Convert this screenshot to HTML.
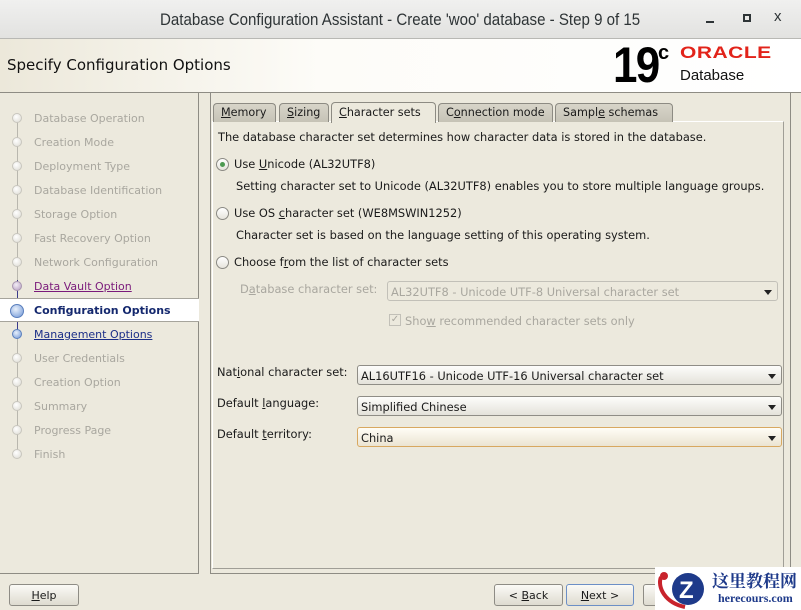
<!DOCTYPE html>
<html><head><meta charset="utf-8"><style>
*{margin:0;padding:0;box-sizing:border-box}
body{width:801px;height:610px;overflow:hidden;background:#ece9dd;font-family:"DejaVu Sans","Liberation Sans",sans-serif;font-size:11px;color:#1a1a1a;position:relative}
.a{position:absolute;white-space:nowrap}
.c{font-size:11.4px}
#title{left:0;top:0;width:801px;height:39px;background:linear-gradient(#f0f0ef,#e2e2e0);border-bottom:1px solid #b8b8b4}
#hdr{left:0;top:39px;width:801px;height:54px;background:linear-gradient(90deg,#ece8da,#fdfcf8 40%,#fff);border-bottom:1px solid #8e8c84}
.st{color:#a9a79f;font-size:11px}
.dot{position:absolute;left:12px;width:10px;height:10px;border-radius:50%;background:radial-gradient(circle at 40% 35%,#fff,#dcdad2);border:1px solid #c8c6be}
.tab{position:absolute;top:103px;height:19px;background:linear-gradient(#d8d5c9,#c6c3b6);border:1px solid #8d8b83;border-bottom:none;border-radius:4px 4px 0 0;padding:2px 0 0 7px;font-size:11.2px}
.sel{position:absolute;height:20px;border:1px solid #8f8d86;border-radius:3px;background:linear-gradient(#fdfdfb,#e4e2da);padding:3px 0 0 3px;font-size:11.4px}
.sel:after{content:"";position:absolute;right:5px;top:8px;border-left:4px solid transparent;border-right:4px solid transparent;border-top:5px solid #222}
.rad{position:absolute;width:13px;height:13px;border-radius:50%;border:1px solid #8b8a84;background:linear-gradient(#fff,#e6e4dc)}
.btn{position:absolute;top:584px;height:22px;border:1px solid #8e8c85;border-radius:3px;background:linear-gradient(#fbfaf6,#dedbd0);text-align:center;padding-top:4px}
</style></head><body>
<div class="a" id="title"></div>
<div class="a" style="left:160px;top:10px;font-family:'Liberation Sans',sans-serif;font-size:17px;color:#2e3436;transform:scaleX(0.887);transform-origin:0 0">Database Configuration Assistant - Create 'woo' database - Step 9 of 15</div>
<div class="a" style="left:706px;top:21px;width:8px;height:2px;background:#2e3436"></div>
<div class="a" style="left:743px;top:14px;width:8px;height:8px;border:2px solid #2e3436"></div>
<div class="a" style="left:774px;top:8px;font-family:'Liberation Sans',sans-serif;font-size:15px;color:#2e3436">x</div>
<div class="a" id="hdr"></div>
<div class="a" style="left:7px;top:56px;font-size:15px;color:#111;font-family:'DejaVu Sans',sans-serif">Specify Configuration Options</div>
<div class="a" style="left:613px;top:40px;font-family:'Liberation Sans',sans-serif;font-size:50px;font-weight:bold;color:#000;letter-spacing:-2px;line-height:50px;transform:scaleX(0.88);transform-origin:0 0">19</div>
<div class="a" style="left:658px;top:42px;font-family:'Liberation Sans',sans-serif;font-size:20px;font-weight:bold;color:#000">c</div>
<div class="a" style="left:680px;top:44px;font-family:'Liberation Sans',sans-serif;font-size:21px;font-weight:bold;color:#e2231a;letter-spacing:0.5px;transform:scaleY(0.78);transform-origin:0 0">ORACLE</div>
<div class="a" style="left:680px;top:67px;font-family:'Liberation Sans',sans-serif;font-size:15px;color:#111">Database</div>

<div class="a" style="left:198px;top:93px;width:1px;height:481px;background:#8e8c84"></div>
<div class="a" style="left:0;top:573px;width:199px;height:1px;background:#8e8c84"></div>
<div class="a" style="left:17px;top:120px;width:1px;height:336px;background:#b9b7ae"></div>
<div class="a" style="left:17px;top:280px;width:1px;height:56px;background:#3a3a8a"></div>
<div class="a" style="left:0;top:298px;width:199px;height:24px;background:#fff;border-top:1px solid #a6a49c;border-bottom:1px solid #a6a49c"></div>

<div class="dot" style="top:113px"></div><div class="a st" style="left:34px;top:112px">Database Operation</div>
<div class="dot" style="top:137px"></div><div class="a st" style="left:34px;top:136px">Creation Mode</div>
<div class="dot" style="top:161px"></div><div class="a st" style="left:34px;top:160px">Deployment Type</div>
<div class="dot" style="top:185px"></div><div class="a st" style="left:34px;top:184px">Database Identification</div>
<div class="dot" style="top:209px"></div><div class="a st" style="left:34px;top:208px">Storage Option</div>
<div class="dot" style="top:233px"></div><div class="a st" style="left:34px;top:232px">Fast Recovery Option</div>
<div class="dot" style="top:257px"></div><div class="a st" style="left:34px;top:256px">Network Configuration</div>
<div class="dot" style="top:281px;background:radial-gradient(circle at 40% 35%,#f3eef6,#b49cc0);border-color:#a896b0"></div><div class="a" style="left:34px;top:280px;color:#7a1a7a;text-decoration:underline">Data Vault Option</div>
<div class="dot" style="top:304px;left:10px;width:14px;height:14px;background:radial-gradient(circle at 40% 35%,#e8f0fb,#6f96d6);border-color:#5a7fbd"></div><div class="a" style="left:34px;top:304px;color:#14286e;font-weight:bold">Configuration Options</div>
<div class="dot" style="top:329px;background:radial-gradient(circle at 40% 35%,#e8f0fb,#6f96d6);border-color:#5a7fbd"></div><div class="a" style="left:34px;top:328px;color:#1c2f88;text-decoration:underline">Management Options</div>
<div class="dot" style="top:353px"></div><div class="a st" style="left:34px;top:352px">User Credentials</div>
<div class="dot" style="top:377px"></div><div class="a st" style="left:34px;top:376px">Creation Option</div>
<div class="dot" style="top:401px"></div><div class="a st" style="left:34px;top:400px">Summary</div>
<div class="dot" style="top:425px"></div><div class="a st" style="left:34px;top:424px">Progress Page</div>
<div class="dot" style="top:449px"></div><div class="a st" style="left:34px;top:448px">Finish</div>

<div class="a" style="left:210px;top:93px;width:1px;height:481px;background:#8e8c84"></div>
<div class="a" style="left:210px;top:573px;width:581px;height:1px;background:#8e8c84"></div>
<div class="a" style="left:790px;top:93px;width:1px;height:481px;background:#8e8c84"></div>
<div class="a" style="left:212px;top:121px;width:572px;height:448px;border:1px solid #a09e96;border-top-color:#fff;border-left-color:#fff"></div>

<div class="tab" style="left:213px;width:63px"><u>M</u>emory</div>
<div class="tab" style="left:279px;width:50px"><u>S</u>izing</div>
<div class="tab" style="left:331px;width:105px;top:102px;height:21px;background:#ece9dd;padding-top:3px"><u>C</u>haracter sets</div>
<div class="tab" style="left:438px;width:115px">C<u>o</u>nnection mode</div>
<div class="tab" style="left:555px;width:118px">Sampl<u>e</u> schemas</div>

<div class="a c" style="left:218px;top:130px">The database character set determines how character data is stored in the database.</div>
<div class="rad" style="left:216px;top:158px"><div style="position:absolute;left:3px;top:3px;width:5px;height:5px;border-radius:50%;background:#4d9a52"></div></div>
<div class="a c" style="left:234px;top:157px">Use <u>U</u>nicode (AL32UTF8)</div>
<div class="a c" style="left:236px;top:179px">Setting character set to Unicode (AL32UTF8) enables you to store multiple language groups.</div>
<div class="rad" style="left:216px;top:207px"></div>
<div class="a c" style="left:234px;top:206px">Use OS <u>c</u>haracter set (WE8MSWIN1252)</div>
<div class="a c" style="left:236px;top:228px">Character set is based on the language setting of this operating system.</div>
<div class="rad" style="left:216px;top:256px"></div>
<div class="a c" style="left:234px;top:255px">Choose f<u>r</u>om the list of character sets</div>
<div class="a c" style="left:240px;top:282px;color:#a9a79f">D<u>a</u>tabase character set:</div>
<div class="sel" style="left:387px;top:281px;width:391px;color:#a9a79f;background:#ece9dd;border-color:#c2c0b8">AL32UTF8 - Unicode UTF-8 Universal character set</div>
<div class="a" style="left:389px;top:314px;width:12px;height:12px;border:1px solid #c2c0b8;color:#a9a79f;font-size:10px;line-height:10px;text-align:center">✓</div>
<div class="a c" style="left:405px;top:314px;color:#a9a79f">Sho<u>w</u> recommended character sets only</div>

<div class="a c" style="left:217px;top:365px">Nat<u>i</u>onal character set:</div>
<div class="sel" style="left:357px;top:365px;width:425px">AL16UTF16 - Unicode UTF-16 Universal character set</div>
<div class="a c" style="left:217px;top:396px">Default <u>l</u>anguage:</div>
<div class="sel" style="left:357px;top:396px;width:425px">Simplified Chinese</div>
<div class="a c" style="left:217px;top:427px">Default <u>t</u>erritory:</div>
<div class="sel" style="left:357px;top:427px;width:425px;border-color:#d8a860;background:linear-gradient(#fffdf6,#ebe4d2)">China</div>

<div class="btn" style="left:9px;width:70px"><u>H</u>elp</div>
<div class="btn" style="left:494px;width:69px">&lt; <u>B</u>ack</div>
<div class="btn" style="left:566px;width:68px;border-color:#6c8fc6"><u>N</u>ext &gt;</div>
<div class="btn" style="left:643px;width:30px"></div>
<div class="a" style="left:655px;top:567px;width:146px;height:43px;background:#fff"></div>
<svg class="a" style="left:655px;top:567px" width="60" height="43"><path d="M6 10 C2 20 10 36 30 40" stroke="#c8232c" stroke-width="4" fill="none"/><circle cx="9" cy="9" r="4" fill="#c8232c"/><circle cx="33" cy="22" r="16" fill="#1e3a8a"/><text x="24" y="31" font-family="Liberation Sans" font-weight="bold" font-size="24" fill="#fff">Z</text></svg>
<div class="a" style="left:712px;top:567px;font-family:'Noto Serif CJK SC',serif;font-size:17px;font-weight:bold;color:#1e3a8a">这里教程网</div>
<div class="a" style="left:718px;top:591px;font-family:'Liberation Serif',serif;font-size:12px;font-weight:bold;color:#1e3a8a">herecours.com</div>
</body></html>
